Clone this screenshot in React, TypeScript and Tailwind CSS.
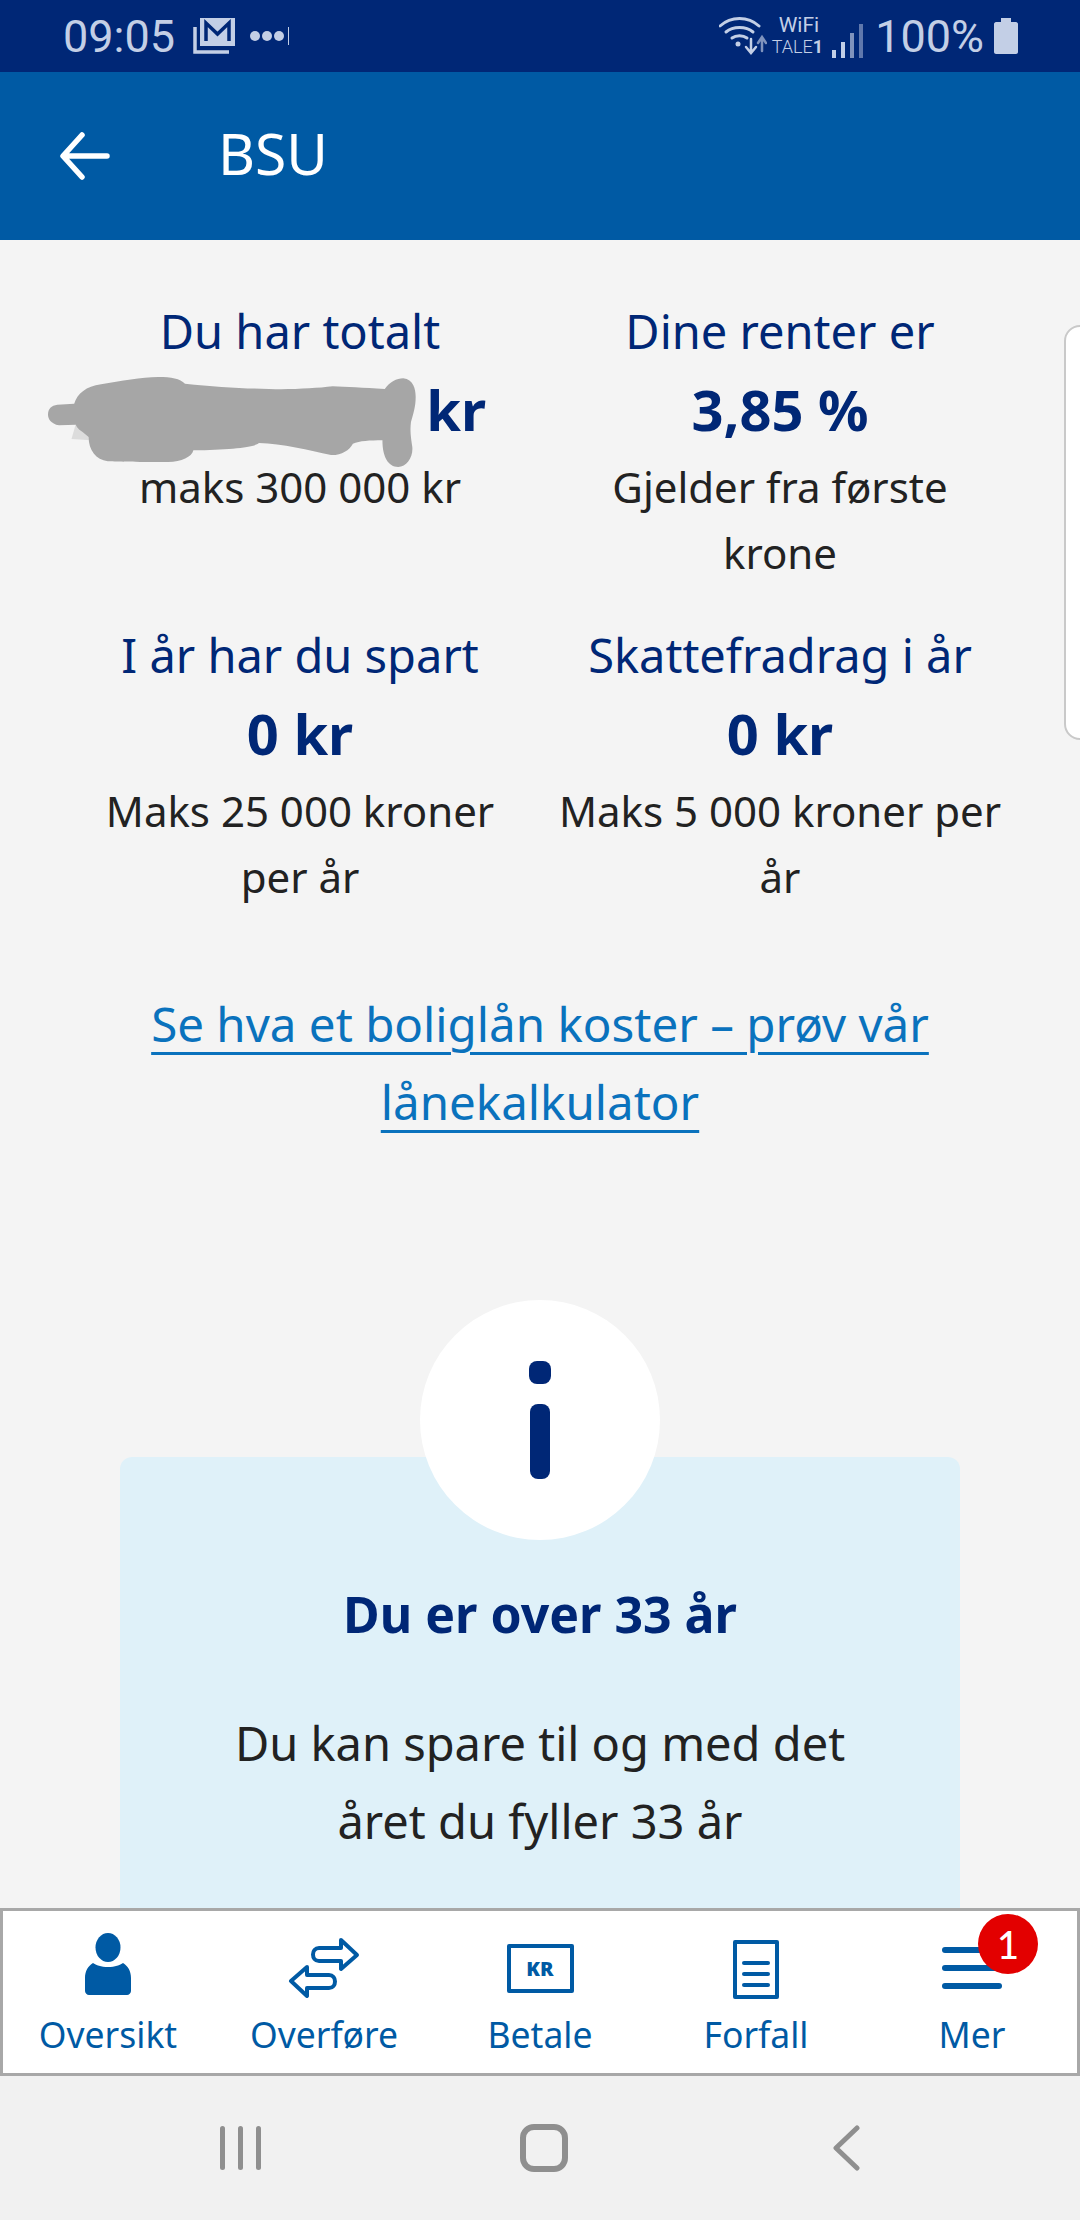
import { ReactNode } from 'react';

function Stat({ label, value, note }: { label: string; value: ReactNode; note: ReactNode }) {
  return (
    <div className="flex flex-col items-center text-center">
      <div className="text-[47px] leading-[66px] whitespace-nowrap text-[#002776]">{label}</div>
      <div className="mt-[3px] text-[56px] leading-[84px] font-bold text-[#002776]">{value}</div>
      <div className="mt-[3px] text-[42px] leading-[66px] whitespace-nowrap text-[#222222]">{note}</div>
    </div>
  );
}

function Redacted() {
  return (
    <svg width="368" height="90" viewBox="62 50 1096 270" preserveAspectRatio="none" className="absolute left-[-66px] top-[10px]">
      <path fill="#dcdcdc" d="M145 190 L180 200 L190 240 L132 236 Z" />
      <path
        fill="#a6a6a6"
        d="M90 133 L140 130 C150 100 175 78 220 72 C280 62 340 50 390 50 C430 50 455 55 470 70 C560 80 640 84 720 86 C790 88 860 84 910 78 C950 80 1000 82 1065 86 C1080 65 1100 54 1120 54 C1150 58 1157 85 1157 110 C1157 140 1150 160 1143 185 C1140 210 1142 225 1147 260 C1150 290 1130 320 1105 320 C1075 320 1058 290 1058 240 C1020 240 990 242 970 250 C960 270 935 285 905 284 C840 270 760 250 690 248 C675 262 600 268 495 270 C490 290 460 305 420 305 C340 305 270 305 240 303 C205 298 183 270 183 230 L165 215 C150 205 145 195 145 193 L95 195 C70 190 62 175 62 163 C62 145 72 135 90 133 Z"
      />
    </svg>
  );
}

function PersonIcon() {
  return (
    <svg width="46" height="62" viewBox="0 0 46 62" fill="#005aa4">
      <ellipse cx="23" cy="14.5" rx="12.5" ry="14.5" />
      <path d="M8 30 C11 32 16 34 23 34 C30 34 35 32 38 30 C43 33 46 38 46 45 L46 58 C46 60 44 62 42 62 L4 62 C2 62 0 60 0 58 L0 45 C0 38 3 33 8 30 Z" />
    </svg>
  );
}

function TransferIcon() {
  return (
    <svg width="72" height="60" viewBox="0 0 72 60" fill="none" stroke="#005aa4" strokeWidth="4" strokeLinejoin="round" className="-mb-[3px]">
      <path d="M53 2 L69 17 L53 31 L53 23 L31 23 C23 23 23 10 31 10 L53 10 Z" />
      <path d="M19 29 L3 43 L19 58 L19 50 L41 50 C49 50 49 37 41 37 L19 37 Z" />
    </svg>
  );
}

function KrIcon() {
  return (
    <div className="mb-[2px] flex h-[49px] w-[67px] items-center justify-center rounded-[2px] border-[4px] border-[#005aa4] text-[20px] leading-none font-black text-[#005aa4]">
      KR
    </div>
  );
}

function DocIcon() {
  return (
    <div className="-mb-[4px] flex h-[59px] w-[46px] flex-col justify-end gap-[7px] rounded-[2px] border-[4px] border-[#005aa4] px-[5px] pb-[8px]">
      <div className="h-[4px] rounded-full bg-[#005aa4]" />
      <div className="h-[4px] rounded-full bg-[#005aa4]" />
      <div className="h-[4px] rounded-full bg-[#005aa4]" />
    </div>
  );
}

function MenuIcon() {
  return (
    <div className="relative mb-[6px] flex w-[60px] flex-col gap-[12px]">
      <div className="h-[6px] rounded-full bg-[#005aa4]" />
      <div className="h-[6px] rounded-full bg-[#005aa4]" />
      <div className="h-[6px] rounded-full bg-[#005aa4]" />
      <div className="absolute left-[36px] top-[-33px] flex h-[60px] w-[60px] items-center justify-center rounded-full bg-[#e30000] font-[Lato,sans-serif] text-[38px] font-medium text-white">
        1
      </div>
    </div>
  );
}

const tabs: { label: string; icon: ReactNode }[] = [
  { label: 'Oversikt', icon: <PersonIcon /> },
  { label: 'Overføre', icon: <TransferIcon /> },
  { label: 'Betale', icon: <KrIcon /> },
  { label: 'Forfall', icon: <DocIcon /> },
  { label: 'Mer', icon: <MenuIcon /> },
];

function StatusBar() {
  return (
    <div className="flex h-[72px] items-center justify-between bg-[#002776] pl-[63px] pr-[62px] font-[Roboto,sans-serif] text-[#c3cfe6]">
      <div className="flex items-center">
        <span className="text-[45px] leading-none">09:05</span>
        <svg width="42" height="36" viewBox="0 0 42 36" className="ml-[18px]">
          <path fill="#c3cfe6" d="M7 0 H42 V28 H7 Z" />
          <path fill="none" stroke="#002776" strokeWidth="3.5" d="M13 23 V5 L24.5 16 L36 5 V23" />
          <path fill="none" stroke="#c3cfe6" strokeWidth="3.5" d="M2 9 V34 H36" />
        </svg>
        <div className="ml-[15px] flex items-center gap-[2px]">
          <div className="h-[10px] w-[10px] rounded-full bg-[#c3cfe6]" />
          <div className="h-[10px] w-[10px] rounded-full bg-[#c3cfe6]" />
          <div className="h-[10px] w-[10px] rounded-full bg-[#c3cfe6]" />
          <div className="ml-[2px] h-[18px] w-[1px] bg-[#c3cfe6]" />
        </div>
      </div>
      <div className="flex items-center">
        <svg width="48" height="38" viewBox="0 0 48 38" fill="none" stroke="#c3cfe6" strokeLinecap="round">
          <path strokeWidth="3" d="M1 9 C12 -1 29 -1 40 9" />
          <path strokeWidth="3" d="M7 15 C14 9 27 9 34 15" />
          <path strokeWidth="3" d="M13 21 C17 18 24 18 28 21" />
          <circle cx="19" cy="27" r="2.5" fill="#c3cfe6" stroke="none" />
          <path strokeWidth="2.5" d="M32 22 V35 M27 30 L32 36 L37 30" />
          <path strokeWidth="2.5" stroke="#7f93bd" d="M43 34 V21 M39 26 L43 20 L47 26" />
        </svg>
        <div className="ml-[5px] flex flex-col items-end leading-[21px]">
          <span className="pr-[4px] text-[21px]">WiFi</span>
          <span className="text-[18px] font-light">TALE<b className="font-bold">1</b></span>
        </div>
        <div className="ml-[9px] flex items-end gap-[5px] self-end pb-[1px]">
          <div className="h-[8px] w-[4px] bg-[#c3cfe6]" />
          <div className="h-[16px] w-[4px] bg-[#c3cfe6]" />
          <div className="h-[25px] w-[4px] bg-[#7f93bd]" />
          <div className="h-[34px] w-[4px] bg-[#5f78ad]" />
        </div>
        <span className="ml-[12px] text-[45px] leading-none">100%</span>
        <svg width="24" height="36" viewBox="0 0 24 36" fill="#c3cfe6" className="ml-[10px]">
          <path d="M7 0 H17 V4 H22 C23 4 24 5 24 6 V34 C24 35 23 36 22 36 H2 C1 36 0 35 0 34 V6 C0 5 1 4 2 4 H7 Z" />
        </svg>
      </div>
    </div>
  );
}

export default function App() {
  return (
    <div className="flex h-[2220px] w-[1080px] flex-col overflow-hidden bg-[#f4f4f4] font-['Noto_Sans',sans-serif]">
      <StatusBar />

      <div className="flex h-[168px] items-center bg-[#005aa4] pl-[60px] text-white">
        <svg width="50" height="48" viewBox="0 0 50 48" fill="none" stroke="#ffffff" strokeWidth="5.5" strokeLinecap="round" strokeLinejoin="round">
          <path d="M47 24 H4 M22 3 L3 24 L22 45" />
        </svg>
        <span className="-mt-[4px] ml-[108px] text-[57px]">BSU</span>
      </div>

      <main className="relative flex-1 overflow-hidden">
        <div className="absolute right-[-20px] top-[85px] h-[415px] w-[36px] rounded-[16px] border-2 border-[#c9c9c9] bg-white" />

        <div className="grid grid-cols-2 gap-y-[36px] px-[60px] pt-[58px]">
          <Stat
            label="Du har totalt"
            value={
              <span className="relative block w-[372px] text-right">
                <Redacted />
                kr
              </span>
            }
            note="maks 300 000 kr"
          />
          <Stat label="Dine renter er" value="3,85 %" note={<>Gjelder fra første<br />krone</>} />
          <Stat label="I år har du spart" value="0 kr" note={<>Maks 25 000 kroner<br />per år</>} />
          <Stat label="Skattefradrag i år" value="0 kr" note={<>Maks 5 000 kroner per<br />år</>} />
        </div>

        <div className="mt-[75px] px-[90px] text-center text-[47.5px] leading-[78px] text-[#0a72bd]">
          <a className="underline decoration-[3px] underline-offset-[10px]">
            Se hva et boliglån koster – prøv vår lånekalkulator
          </a>
        </div>

        <div className="relative mx-[120px] mt-[316px] h-[600px] rounded-[12px] bg-[#dff1f9] text-center">
          <div className="absolute left-[300px] top-[-157px] flex h-[240px] w-[240px] items-center justify-center rounded-full bg-white">
            <div className="flex flex-col items-center gap-[20px]">
              <div className="h-[23px] w-[22px] rounded-[8px] bg-[#002776]" />
              <div className="h-[75px] w-[20px] rounded-[8px] bg-[#002776]" />
            </div>
          </div>
          <h2 className="pt-[122px] text-[50px] leading-[70px] font-bold text-[#002776]">Du er over 33 år</h2>
          <p className="mt-[55px] text-[47px] leading-[78px] text-[#222222]">
            Du kan spare til og med det
            <br />
            året du fyller 33 år
          </p>
        </div>
      </main>

      <nav className="grid h-[168px] grid-cols-[repeat(5,216px)] justify-center border-[3px] border-[#a8a8a8] bg-white">
        {tabs.map((tab) => (
          <div key={tab.label} className="flex flex-col items-center">
            <div className="flex h-[101px] items-end pb-[17px]">{tab.icon}</div>
            <span className="text-[35.5px] leading-[44px] text-[#005aa4]">{tab.label}</span>
          </div>
        ))}
      </nav>

      <div className="flex h-[144px] items-center justify-between bg-[#f1f1f1] pl-[220px] pr-[220px]">
        <div className="flex gap-[13px]">
          <div className="h-[44px] w-[5px] rounded-full bg-[#8f8f8f]" />
          <div className="h-[44px] w-[5px] rounded-full bg-[#8f8f8f]" />
          <div className="h-[44px] w-[5px] rounded-full bg-[#8f8f8f]" />
        </div>
        <div className="-ml-[6px] h-[48px] w-[48px] rounded-[14px] border-[6px] border-[#8f8f8f]" />
        <svg width="28" height="46" viewBox="0 0 28 46" fill="none" stroke="#8f8f8f" strokeWidth="5" strokeLinecap="round" strokeLinejoin="round">
          <path d="M25 3 L4 23 L25 43" />
        </svg>
      </div>
    </div>
  );
}
